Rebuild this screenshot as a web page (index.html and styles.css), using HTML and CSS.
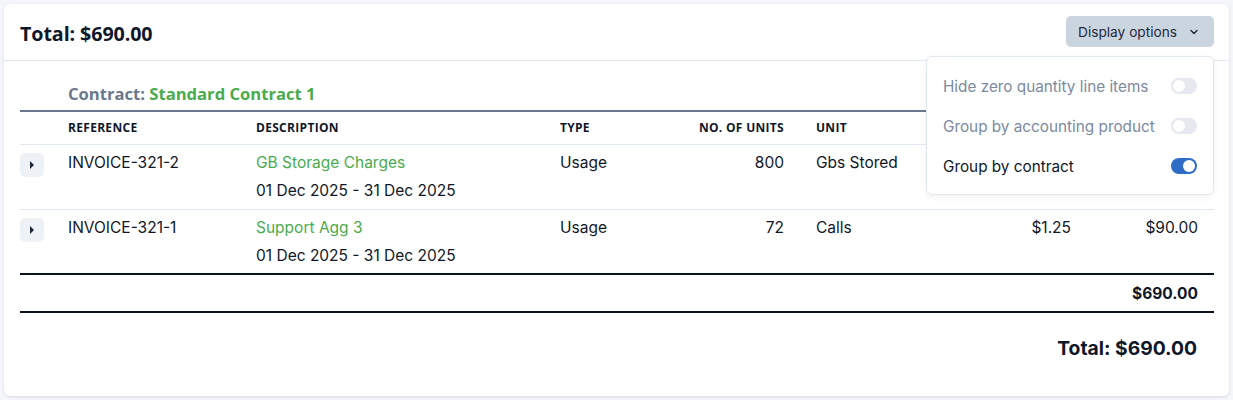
FILE: index.html
```html
<!DOCTYPE html>
<html>
<head>
<meta charset="utf-8">
<link rel="stylesheet" href="styles.css">
</head>
<body>
<div class="card">
  <div class="card-header">
    <h2 class="title">Total: $690.00</h2>
    <div class="options">
      <button class="options-btn">Display options
        <svg width="10" height="10" viewBox="0 0 10 10"><path d="M2 3.5 L5 6.5 L8 3.5" fill="none" stroke="#1e293b" stroke-width="1.4" stroke-linecap="round" stroke-linejoin="round"/></svg>
      </button>
      <div class="menu">
        <div class="menu-item disabled"><span>Hide zero quantity line items</span><span class="toggle"></span></div>
        <div class="menu-item disabled"><span>Group by accounting product</span><span class="toggle"></span></div>
        <div class="menu-item"><span>Group by contract</span><span class="toggle on"></span></div>
      </div>
    </div>
  </div>
  <div class="card-body">
    <h3 class="contract"><span class="label">Contract:</span> <span class="name">Standard Contract 1</span></h3>
    <table class="lines">
      <colgroup>
        <col style="width:32px"><col style="width:188px"><col style="width:304px"><col style="width:128px"><col style="width:128px"><col style="width:160px"><col style="width:127px"><col style="width:127px">
      </colgroup>
      <thead>
        <tr>
          <th class="first"></th><th>Reference</th><th>Description</th><th>Type</th><th class="num">No. of units</th><th>Unit</th><th class="num"></th><th class="num"></th>
        </tr>
      </thead>
      <tbody>
        <tr>
          <td class="first"><span class="expand"></span></td>
          <td>INVOICE-321-2</td>
          <td><div class="desc">GB Storage Charges</div><div class="period">01 Dec 2025 - 31 Dec 2025</div></td>
          <td>Usage</td><td class="num">800</td><td>Gbs Stored</td><td class="num"></td><td class="num"></td>
        </tr>
        <tr class="last">
          <td class="first"><span class="expand"></span></td>
          <td>INVOICE-321-1</td>
          <td><div class="desc">Support Agg 3</div><div class="period">01 Dec 2025 - 31 Dec 2025</div></td>
          <td>Usage</td><td class="num">72</td><td>Calls</td><td class="num">$1.25</td><td class="num">$90.00</td>
        </tr>
      </tbody>
      <tfoot>
        <tr><td colspan="8" class="num subtotal">$690.00</td></tr>
      </tfoot>
    </table>
    <div class="grand">Total: $690.00</div>
  </div>
</div>
</body>
</html>
```
FILE: styles.css
```css
* { box-sizing: border-box; }
html, body { margin: 0; padding: 0; }
body {
  background: #f4f6f9;
  padding: 4px;
  font-family: "Inter", "Lato", sans-serif;
  color: #0f172a;
  height: 400px;
}
.card {
  background: #fff;
  border-radius: 6px;
  box-shadow: 0 1px 3px rgba(15, 23, 42, 0.12);
  height: 392px;
}
.card-header {
  height: 57px;
  border-bottom: 1px solid #e2e8f0;
  display: flex;
  align-items: center;
  justify-content: space-between;
  padding: 0 15px 0 16px;
}
.title {
  margin: 0;
  font-family: "Open Sans", sans-serif;
  font-weight: 700;
  font-size: 19.7px;
  letter-spacing: -0.1px;
  margin-top: 3px;
}
.options { position: relative; align-self: flex-start; margin-top: 12px; }
.options-btn {
  display: flex;
  align-items: center;
  gap: 12px;
  height: 31px;
  width: 148px;
  padding: 0 0 0 12px;
  border: none;
  border-radius: 5px;
  background: #cbd5e0;
  color: #1e293b;
  font-family: "Inter", sans-serif;
  font-size: 13.7px;
}
.menu {
  position: absolute;
  top: 40px;
  right: 0;
  width: 288px;
  background: #fff;
  border: 1px solid #e2e8f0;
  border-radius: 6px;
  box-shadow: 0 2px 6px rgba(15, 23, 42, 0.06);
  padding: 9px 16px 8px 16px;
  z-index: 5;
}
.menu-item {
  display: flex;
  align-items: center;
  justify-content: space-between;
  height: 40px;
  font-size: 15.3px;
  color: #0f172a;
}
.menu-item.disabled { color: #7b8aa1; }
.toggle {
  width: 26px;
  height: 16px;
  border-radius: 8px;
  background: #e5e9ef;
  position: relative;
  flex: none;
}
.toggle::after {
  content: "";
  position: absolute;
  top: 2px;
  left: 2px;
  width: 12px;
  height: 12px;
  border-radius: 50%;
  background: #fff;
}
.toggle.on { background: #2e6cc6; }
.toggle.on::after { left: 12px; }

.card-body { padding: 20px 16px 0 16px; }
.contract {
  margin: 0 0 0 48px;
  font-family: "Open Sans", sans-serif;
  font-weight: 700;
  font-size: 16.6px;
  line-height: 24px;
  padding-bottom: 4px;
  padding-top: 1px;
}
.contract .label { color: #6b778d; }
.contract .name { color: #4aab4e; }
.lines {
  width: 1194px;
  table-layout: fixed;
  border-collapse: collapse;
  border-top: 2px solid #6b778d;
}
.lines th, .lines td { padding: 0 16px; text-align: left; }
.lines th.first, .lines td.first { padding: 0; }
.lines th {
  font-family: "Open Sans", sans-serif;
  font-weight: 700;
  font-size: 12px;
  text-transform: uppercase;
  letter-spacing: 0.3px;
  height: 33px;
  border-bottom: 1px solid #e2e8f0;
  color: #0f172a;
}
.lines .num { text-align: right; }
.lines tbody td {
  font-size: 15.5px;
  vertical-align: top;
  padding-top: 8px;
  height: 65px;
  line-height: 20px;
}
.lines tbody tr { border-bottom: 1px solid #e2e8f0; }
.lines tbody tr.last { border-bottom: 2px solid #0b1220; }
.lines tbody td.first { padding-top: 8px; }
.expand {
  display: block;
  width: 24px;
  height: 24px;
  border-radius: 5px;
  background: #eef2f6;
  position: relative;
}
.expand::after {
  content: "";
  position: absolute;
  left: 10px;
  top: 8px;
  border-left: 4px solid #1e293b;
  border-top: 4px solid transparent;
  border-bottom: 4px solid transparent;
}
.desc { color: #4aab4e; }
.period { margin-top: 8px; }
.lines tfoot tr { border-bottom: 2px solid #0b1220; }
.subtotal {
  height: 38px;
  font-weight: 700;
  font-size: 15.5px;
  padding-right: 16px !important;
}
.grand {
  text-align: right;
  padding: 23px 16px 0 0;
  font-weight: 700;
  font-size: 19.3px;
}
```
